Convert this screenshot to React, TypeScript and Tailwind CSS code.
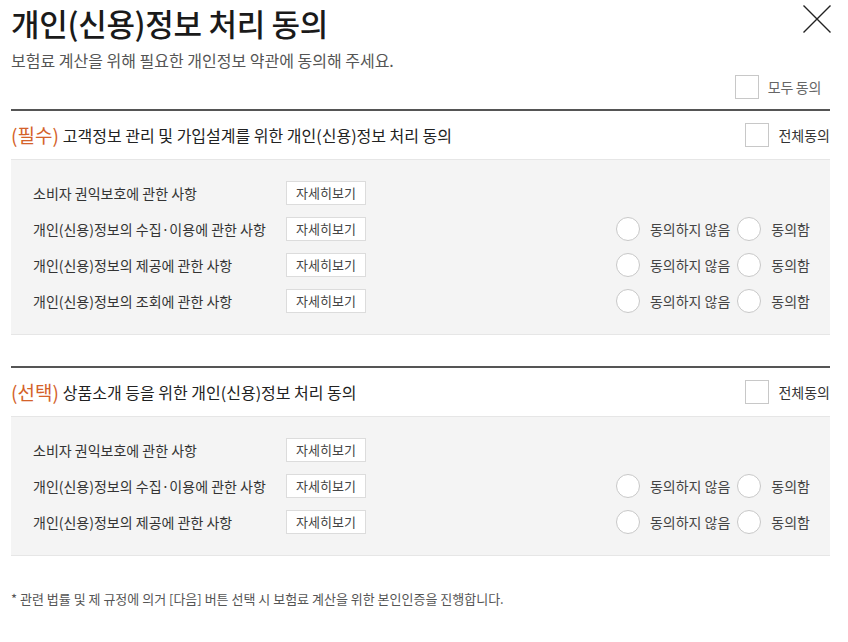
import React from "react";

type Item = { label: string; choice?: boolean };

const requiredItems: Item[] = [
  { label: "소비자 권익보호에 관한 사항" },
  { label: "개인(신용)정보의 수집·이용에 관한 사항", choice: true },
  { label: "개인(신용)정보의 제공에 관한 사항", choice: true },
  { label: "개인(신용)정보의 조회에 관한 사항", choice: true },
];

const optionalItems: Item[] = [
  { label: "소비자 권익보호에 관한 사항" },
  { label: "개인(신용)정보의 수집·이용에 관한 사항", choice: true },
  { label: "개인(신용)정보의 제공에 관한 사항", choice: true },
];

function CheckBox() {
  return <span className="block size-[24px] border border-[#c8c8c8] bg-white" />;
}

function Radio({ label }: { label: string }) {
  return (
    <span className="flex items-center">
      <span className="block size-[24px] rounded-full border border-[#c8c8c8] bg-white" />
      <span className="ml-[10px] text-[14px] leading-[20px] text-[#444]">{label}</span>
    </span>
  );
}

function Section({
  tag,
  title,
  items,
}: {
  tag: string;
  title: string;
  items: Item[];
}) {
  return (
    <section className="border-t-2 border-[#555]">
      <div className="flex h-[48px] items-center justify-between">
        <h2 className="flex items-center text-[16px] leading-[24px] text-[#222]">
          <span className="mr-[4px] text-[19px] text-[#d4622a]">({tag})</span>
          {title}
        </h2>
        <label className="flex items-center gap-[9px]">
          <CheckBox />
          <span className="text-[14px] leading-[20px] text-[#333]">전체동의</span>
        </label>
      </div>
      <ul className="border-y border-[#e6e6e6] bg-[#f4f4f4] py-[15px] pl-[22px] pr-[20px]">
        {items.map((item, i) => (
          <li key={i} className="flex h-[36px] items-center">
            <span className="w-[253px] text-[14px] leading-[20px] text-[#333]">{item.label}</span>
            <button className="h-[24px] w-[80px] border border-[#dcdcdc] bg-white text-[13px] leading-[20px] text-[#444]">
              자세히보기
            </button>
            {item.choice && (
              <div className="ml-auto flex items-center gap-[7px]">
                <Radio label="동의하지 않음" />
                <Radio label="동의함" />
              </div>
            )}
          </li>
        ))}
      </ul>
    </section>
  );
}

export default function App() {
  return (
    <div className="h-[642px] w-[848px] bg-white pl-[11px] pr-[18px] font-['Noto_Sans_CJK_KR',sans-serif]">
      <div className="flex items-start justify-between">
        <h1 className="text-[31px] font-medium leading-[45px] tracking-[-0.3px] text-[#1a1a1a]">
          개인(신용)정보 처리 동의
        </h1>
        <button className="mr-[-1px] mt-[5px]" aria-label="닫기">
          <svg width="28" height="28" viewBox="0 0 28 28" fill="none">
            <path d="M0.5 0.5L27.5 27.5M27.5 0.5L0.5 27.5" stroke="#222" strokeWidth="1.4" />
          </svg>
        </button>
      </div>
      <p className="mt-[4px] text-[16px] leading-[22px] text-[#555]">
        보험료 계산을 위해 필요한 개인정보 약관에 동의해 주세요.
      </p>
      <div className="mt-[4px] flex justify-end pr-[9px]">
        <label className="flex items-center gap-[9px]">
          <CheckBox />
          <span className="text-[14px] leading-[20px] tracking-[-0.3px] text-[#666]">모두 동의</span>
        </label>
      </div>
      <div className="mt-[10px]">
        <Section
          tag="필수"
          title="고객정보 관리 및 가입설계를 위한 개인(신용)정보 처리 동의"
          items={requiredItems}
        />
      </div>
      <div className="mt-[31px]">
        <Section
          tag="선택"
          title="상품소개 등을 위한 개인(신용)정보 처리 동의"
          items={optionalItems}
        />
      </div>
      <p className="mt-[33px] text-[13px] leading-[20px] text-[#555]">
        * 관련 법률 및 제 규정에 의거 [다음] 버튼 선택 시 보험료 계산을 위한 본인인증을 진행합니다.
      </p>
    </div>
  );
}
